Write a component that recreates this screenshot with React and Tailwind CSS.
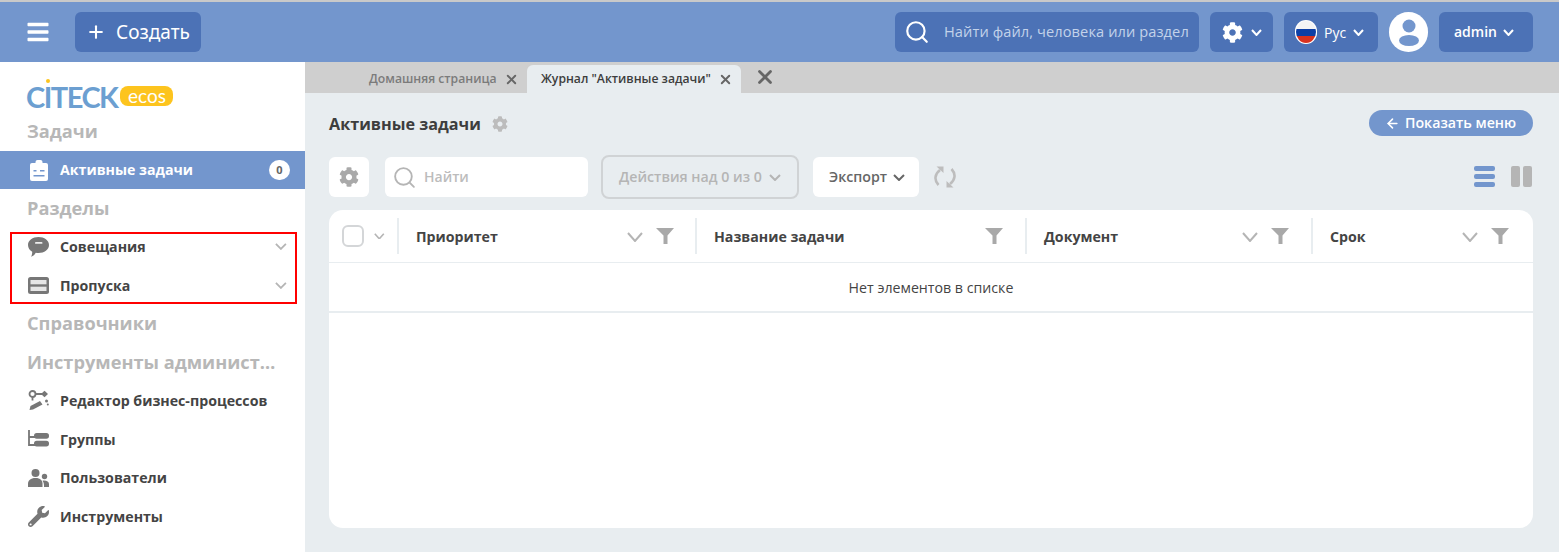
import React from "react";
import { FaBars, FaCog, FaWrench } from "react-icons/fa";
import { LuSearch, LuX, LuPlus, LuArrowLeft } from "react-icons/lu";

const Chev = ({ w = 11, h = 6, sw = 2, color = "currentColor", className = "" }) => (
  <svg width={w + sw} height={h + sw} viewBox={`0 0 ${w + sw} ${h + sw}`} className={`shrink-0 ${className}`} fill="none">
    <path d={`M${sw / 2} ${sw / 2}L${sw / 2 + w / 2} ${sw / 2 + h}L${sw / 2 + w} ${sw / 2}`} stroke={color} strokeWidth={sw} />
  </svg>
);
const Funnel = () => (
  <svg width="18" height="16" viewBox="0 0 18 16" className="shrink-0">
    <path d="M0 0h18l-6.500 7.500V16h-4V7.500z" fill="#a9a9a9" />
  </svg>
);

const Clipboard = () => (
  <svg width="18" height="21" viewBox="0 0 18 21">
    <path fill="#fff" d="M2 3h3.500V2a2 2 0 0 1 2-2h3a2 2 0 0 1 2 2v1H16a2 2 0 0 1 2 2v14a2 2 0 0 1-2 2H2a2 2 0 0 1-2-2V5a2 2 0 0 1 2-2z" />
    <path fill="#7396cd" d="M3.500 10h3v1.600h-3zM10 10h4.500v1.600H10zM3.500 15h11v1.600h-11z" />
  </svg>
);
const Speech = () => (
  <svg width="21" height="20" viewBox="0 0 21 20">
    <path fill="#777" d="M10.500 0C16.300 0 21 3.500 21 8s-4.700 8-10.500 8c-.9 0-1.800-.1-2.700-.3C6.500 17.900 5 19.200 3 19.700c.9-1.400 1.300-3 1.200-4.900C1.700 13.300 0 10.800 0 8c0-4.500 4.700-8 10.500-8z" />
    <rect x="7" y="5" width="7.500" height="1.800" rx=".9" fill="#eee" />
  </svg>
);
const Pass = () => (
  <svg width="21" height="17" viewBox="0 0 21 17">
    <rect width="21" height="17" rx="2.500" fill="#777" />
    <rect x="2.500" y="3" width="16" height="4.300" fill="#e6e6e6" />
    <rect x="2.500" y="9.700" width="16" height="4.300" fill="#e6e6e6" />
  </svg>
);
const Process = () => (
  <svg width="21" height="21" viewBox="0 0 21 21" fill="none">
    <circle cx="4.500" cy="4" r="3" stroke="#777" strokeWidth="1.800" />
    <path d="M7.500 4h8M4.500 7v3.500" stroke="#777" strokeWidth="1.800" />
    <path d="M16.500 .8L20 4l-3.500 3.200L13 4z" fill="#777" />
    <path d="M1.500 20l1-4L12 11l2.500 3.500L5 19.500z" fill="#777" />
    <circle cx="18.500" cy="11" r="1.500" fill="#777" />
    <circle cx="19.800" cy="14.500" r="1" fill="#777" />
  </svg>
);
const Groups = () => (
  <svg width="21" height="18" viewBox="0 0 21 18">
    <path d="M1 0v15h6M1 7h6" stroke="#777" strokeWidth="1.800" fill="none" />
    <rect x="6" y="3" width="15" height="5.800" rx="2.700" fill="#777" />
    <rect x="6" y="10.700" width="15" height="5.800" rx="2.700" fill="#777" />
  </svg>
);
const Users = () => (
  <svg width="21" height="18" viewBox="0 0 21 18">
    <circle cx="7.500" cy="4" r="4" fill="#777" />
    <path d="M0 18v-3.500C0 11.500 2.500 9 7.500 9s7 2.500 7 5.500V18z" fill="#777" />
    <circle cx="16.500" cy="7.500" r="2.700" fill="#777" />
    <path d="M16 11.500c3 0 5 1.500 5 3.500v3h-5c0-2.500 0-4.500-1.500-6.300.4-.1 1-.2 1.500-.2z" fill="#777" />
  </svg>
);
const Refresh = () => (
  <svg width="22" height="22" viewBox="0 0 22 22" fill="none" stroke="#bdbdbd" strokeWidth="2.600">
    <path d="M6 4C.8 8-.2 14 4.500 19" />
    <path d="M16 18c5.200-4 6.200-10 1.500-15" />
    <path d="M2.500 .5h7v6.500z" fill="#bdbdbd" stroke="none" />
    <path d="M19.500 21.500h-7V15z" fill="#bdbdbd" stroke="none" />
  </svg>
);
const Flag = () => (
  <span className="w-[22px] h-[24px] rounded-full bg-white flex items-center justify-center overflow-hidden">
    <svg width="22" height="24" viewBox="0 0 22 24">
      <clipPath id="flagc"><ellipse cx="11" cy="12" rx="10" ry="11" /></clipPath>
      <g clipPath="url(#flagc)">
        <rect width="22" height="8" y="1" fill="#f4f4f4" />
        <rect width="22" height="7" y="9" fill="#0d3fa6" />
        <rect width="22" height="8" y="16" fill="#d9321f" />
      </g>
    </svg>
  </span>
);
const Avatar = () => (
  <span className="w-[39px] h-[40px] rounded-full bg-white flex items-center justify-center">
    <svg width="24" height="30" viewBox="0 0 24 30">
      <circle cx="12" cy="9" r="6.500" fill="#7396cd" />
      <ellipse cx="12" cy="23.500" rx="10" ry="5.500" fill="#7396cd" />
    </svg>
  </span>
);

const HeaderBtn = ({ className = "", children }) => (
  <div className={`h-10 rounded-md bg-[#4c72b6] flex items-center text-white ${className}`}>{children}</div>
);

const Heading = ({ children }) => (
  <div className="h-[38.500px] pl-[27px] pr-[29px] flex items-center text-[18.200px] font-bold text-[#b7b7b7]">
    <span className="truncate">{children}</span>
  </div>
);

const Row = ({ icon, children, arrow }) => (
  <div className="h-[38.500px] flex items-center pl-[28px] pr-[18px] text-[14.200px] font-bold text-[#444]">
    <span className="w-[32px] flex items-center shrink-0">{icon}</span>
    <span className="flex-1">{children}</span>
    {arrow && <Chev w={10} h={5} sw={1.800} color="#b5b5b5" />}
  </div>
);

const Col = ({ w, title, chevron = true }) => (
  <div className={`${w} h-[52px] relative flex items-center pl-[19px]`}>
    <span className="absolute left-0 top-[8px] h-[36px] w-[2px] bg-[#e8edf0]" />
    <span className="flex-1 text-[14.200px] font-bold text-[#444] pt-[2px]">{title}</span>
    {chevron && <Chev w={14} h={8} sw={2} color="#b5b5b5" className="mr-[13px] mt-[2px]" />}
    <Funnel />
  </div>
);

export default function App() {
  return (
    <div className="w-[1559px] h-[552px] overflow-hidden relative bg-[#e8edf0] font-['Open_Sans',sans-serif]">
      <header className="h-[62px] bg-[#7396cd] border-t-2 border-[#c9c9c9] flex items-center pr-[26px] pl-[27px]">
        <FaBars className="w-[22px] h-[24px] text-white" />
        <HeaderBtn className="ml-[26px] w-[126px] pl-[11px] gap-[10px]">
          <LuPlus className="w-[20px] h-[20px]" strokeWidth={2.500} />
          <span className="text-[19px] font-['Noto_Sans',sans-serif]">Создать</span>
        </HeaderBtn>
        <div className="flex-1" />
        <HeaderBtn className="w-[304px] pl-[9px] gap-[14px]">
          <LuSearch className="w-[26px] h-[26px]" strokeWidth={2} />
          <span className="text-[14.600px] text-[#c3d2ea] whitespace-nowrap tracking-[.1px]">Найти файл, человека или раздел</span>
        </HeaderBtn>
        <HeaderBtn className="ml-[11px] w-[63px] pl-[12px] gap-[8px]">
          <FaCog className="w-[21px] h-[21px]" />
          <Chev w={9} h={5} sw={2} />
        </HeaderBtn>
        <HeaderBtn className="ml-[11px] w-[94px] pl-[11px] gap-[7px]">
          <Flag />
          <span className="text-[14px] font-medium">Рус</span>
          <Chev w={9} h={5} sw={2} />
        </HeaderBtn>
        <div className="ml-[11px]"><Avatar /></div>
        <HeaderBtn className="ml-[11px] w-[94px] pl-[15px] gap-[6px]">
          <span className="text-[14px] font-semibold -mt-[1px]">admin</span>
          <Chev w={9} h={5} sw={2} />
        </HeaderBtn>
      </header>

      <div className="flex h-[490px]">
        <aside className="w-[305px] h-full bg-white shrink-0 pt-[13px]">
          <div className="h-[42px] pl-[26px] flex items-center gap-[3px]">
            <span className="relative text-[29px] leading-none text-[#6c9fd1] font-['Lato',sans-serif] font-bold tracking-[-1.500px]">
              CITECK
              <span className="absolute left-[20px] -top-[3px] w-[4px] h-[4px] rounded-full bg-[#fdc41e]" />
            </span>
            <span className="h-[20px] w-[53px] -mt-[1px] rounded-lg bg-[#fdc41e] text-white text-[19px] leading-none flex items-center justify-center font-['Lato',sans-serif]">ecos</span>
          </div>
          <div className="h-[34px] pl-[27px] pb-[4px] flex items-center text-[18.200px] font-bold text-[#b7b7b7]">Задачи</div>
          <div className="h-[38px] bg-[#7396cd] flex items-center pl-[30px] pr-[15px] text-[14.200px] font-bold text-white">
            <span className="w-[30px] flex items-center"><Clipboard /></span>
            <span className="flex-1">Активные задачи</span>
            <span className="w-[21px] h-[20px] rounded-full bg-white text-[#666] text-[11px] font-bold flex items-center justify-center">0</span>
          </div>
          <Heading>Разделы</Heading>
          <Row icon={<Speech />} arrow>Совещания</Row>
          <Row icon={<Pass />} arrow>Пропуска</Row>
          <Heading>Справочники</Heading>
          <Heading>Инструменты администрирования</Heading>
          <Row icon={<Process />}>Редактор бизнес-процессов</Row>
          <Row icon={<Groups />}>Группы</Row>
          <Row icon={<Users />}>Пользователи</Row>
          <Row icon={<FaWrench className="w-[21px] h-[21px] text-[#777]" />}>Инструменты</Row>
        </aside>

        <main className="flex-1 min-w-0">
          <div className="h-[31px] bg-[#cfcfcf] flex items-end font-semibold pl-[64px]">
            <div className="h-[28px] w-[158px] flex items-center text-[#7b7b7b] whitespace-nowrap">
              <span className="text-[12.200px]">Домашняя страница</span>
              <LuX className="ml-[7px] w-[15px] h-[15px] shrink-0 text-[#666]" strokeWidth={3} />
            </div>
            <div className="h-[28px] w-[214px] bg-[#e8edf0] rounded-t-md flex items-center pl-[14px] text-[#3d3d3d] whitespace-nowrap">
              <span className="text-[12.200px]">Журнал "Активные задачи"</span>
              <LuX className="ml-[7px] w-[15px] h-[15px] shrink-0 text-[#666]" strokeWidth={3} />
            </div>
            <LuX className="ml-[13px] mb-[5px] w-[22px] h-[22px] text-[#666]" strokeWidth={3} />
          </div>

          <div className="pl-[24px] pr-[26px]">
            <div className="h-[62px] flex items-center">
              <span className="text-[16.200px] font-bold text-[#3d3d3d]">Активные задачи</span>
              <FaCog className="ml-[11px] w-[16px] h-[16px] text-[#bcbcbc]" />
              <div className="flex-1" />
              <div className="h-[26px] -mt-[2px] w-[164px] rounded-full bg-[#7396cd] text-white text-[14.200px] font-semibold flex items-center pl-[16px] gap-[5px]">
                <LuArrowLeft className="w-[15px] h-[15px]" strokeWidth={2.500} />
                Показать меню
              </div>
            </div>

            <div className="h-[44px] flex items-center">
              <div className="w-[40px] h-[40px] rounded-md bg-white flex items-center justify-center">
                <FaCog className="w-[20px] h-[20px] text-[#a9a9a9]" />
              </div>
              <div className="ml-[16px] w-[203px] h-[40px] rounded-md bg-white flex items-center pl-[7px] gap-[7px]">
                <LuSearch className="w-[25px] h-[25px] text-[#b5b5b5]" strokeWidth={1.800} />
                <span className="text-[14px] font-semibold text-[#bcbcbc] -mt-[1px]">Найти</span>
              </div>
              <div className="ml-[13px] w-[198px] h-[44px] rounded-lg border-2 border-[#d0d3d5] flex items-center pl-[16px] gap-[7px] text-[14.200px] font-semibold text-[#b5b5b5] whitespace-nowrap">
                Действия над 0 из 0
                <Chev w={10} h={5} sw={2} />
              </div>
              <div className="ml-[14px] w-[106px] h-[40px] rounded-md bg-white flex items-center pl-[16px] gap-[6px] text-[14.200px] font-semibold text-[#666]">
                Экспорт
                <Chev w={10} h={5} sw={2} />
              </div>
              <span className="ml-[15px]"><Refresh /></span>
              <div className="flex-1" />
              <svg width="21" height="21" viewBox="0 0 21 21" className="-mt-[1px]">
                <rect y="0" width="21" height="5" rx="2" fill="#7396cd" />
                <rect y="8" width="21" height="5" rx="2" fill="#7396cd" />
                <rect y="16" width="21" height="5" rx="2" fill="#7396cd" />
              </svg>
              <svg width="21" height="21" viewBox="0 0 21 21" className="ml-[16px] mr-[1px] -mt-[1px]">
                <rect x="0" width="9" height="21" rx="2" fill="#b5b5b5" />
                <rect x="12" width="9" height="21" rx="2" fill="#b5b5b5" />
              </svg>
            </div>

            <div className="mt-[11px] h-[318px] bg-white rounded-[14px] overflow-hidden">
              <div className="flex h-[53px] border-b border-[#e8edf0]">
                <div className="w-[68px] h-[52px] flex items-center pl-[13px] gap-[10px]">
                  <span className="w-[22px] h-[22px] rounded-md border-2 border-[#d4d6d8]" />
                  <Chev w={9} h={5} sw={1.600} color="#b5b5b5" />
                </div>
                <Col w="w-[298px] pr-[21px]" title="Приоритет" />
                <Col w="w-[330px] pr-[22px]" title="Название задачи" chevron={false} />
                <Col w="w-[286px] pr-[22px]" title="Документ" />
                <Col w="w-[222px] pr-[24px]" title="Срок" />
              </div>
              <div className="h-[50px] pt-[2px] border-b-2 border-[#e8edf0] flex items-center justify-center text-[14.200px] text-[#444]">
                Нет элементов в списке
              </div>
            </div>
          </div>
        </main>
      </div>

      <div className="absolute left-[10px] top-[232px] w-[287px] h-[72px] border-2 border-[#ff0000] pointer-events-none" />
    </div>
  );
}
